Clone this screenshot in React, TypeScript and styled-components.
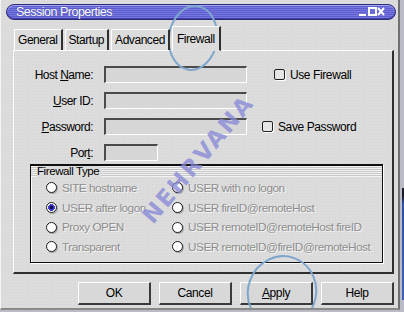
import React from 'react'
import styled, { createGlobalStyle } from 'styled-components'

const uiFont = `"Liberation Sans", Arial, sans-serif`

const GlobalStyle = createGlobalStyle`
  html, body {
    margin: 0;
    padding: 0;
    background: #b9bcc4;
  }
  body {
    font-family: ${uiFont};
  }
`

const Window = styled.div`
  position: relative;
  width: 400px;
  height: 310px;
  box-sizing: border-box;
  background-color: #dcdcdc;
  background-image: radial-gradient(rgba(0, 0, 0, 0.035) 0.6px, transparent 0.8px);
  background-size: 3px 3px;
  border-left: 1px solid #f4f4f4;
  border-right: 2px solid #707070;
  border-bottom: 2px solid #8a8a8a;
  display: flex;
  flex-direction: column;
  overflow: hidden;
`

const TitleBar = styled.div`
  margin: 4px 2px 0 5px;
  height: 14px;
  border-radius: 8px;
  border: 1px solid #2c2c78;
  background: repeating-linear-gradient(
    to bottom,
    #7676e0 0px,
    #7676e0 1px,
    #5e5ece 1px,
    #5e5ece 2px
  );
  box-shadow: inset 0 1px 0 #a8a8f4, inset 0 -1px 0 #3c3ca4;
  display: flex;
  align-items: center;
  justify-content: space-between;
  padding: 0 10px 0 9px;
`

const Title = styled.span`
  color: #ffffff;
  font-size: 12.5px;
  letter-spacing: -0.5px;
  text-shadow: 0 0 1px #303090;
`

const Controls = styled.div`
  display: flex;
  align-items: center;
`

const TabStrip = styled.div`
  display: flex;
  align-items: flex-end;
  margin: 6px 0 0 13px;
  height: 24px;
  position: relative;
  z-index: 1;
`

const Tab = styled.div<{ $active?: boolean }>`
  box-sizing: border-box;
  height: ${p => (p.$active ? '25px' : '21px')};
  margin-right: 2px;
  padding: ${p => (p.$active ? '5px 4px 0 4px' : '3px 3px 0 3px')};
  font-size: 12px;
  letter-spacing: -0.45px;
  color: #000;
  background: #dcdcdc;
  border-top: 1px solid #ffffff;
  border-left: 1px solid #ffffff;
  border-right: 2px solid #303030;
  border-bottom: ${p => (p.$active ? '1px solid #dcdcdc' : 'none')};
  margin-bottom: ${p => (p.$active ? '-1px' : '0')};
`

const Panel = styled.div`
  margin: 0 0 0 12px;
  width: 381px;
  height: 224px;
  box-sizing: border-box;
  border-top: 1px solid #ffffff;
  border-left: 1px solid #ffffff;
  border-right: 2px solid #303030;
  border-bottom: 2px solid #303030;
  padding: 15px 0 0 0;
  display: flex;
  flex-direction: column;
`

const FieldRow = styled.div<{ $gap: number }>`
  display: flex;
  align-items: center;
  height: 17px;
  margin-bottom: ${p => p.$gap}px;
`

const Label = styled.span`
  width: 79px;
  margin-right: 11px;
  text-align: right;
  font-size: 12px;
  letter-spacing: -0.5px;
  color: #000;
`

const Field = styled.div<{ $width: number }>`
  width: ${p => p.$width}px;
  height: 17px;
  box-sizing: border-box;
  background: #d6d6d6;
  border-top: 2px solid #4a4a4a;
  border-left: 2px solid #4a4a4a;
  border-right: 1px solid #ffffff;
  border-bottom: 1px solid #ffffff;
`

const CheckLabel = styled.label<{ $indent: number }>`
  display: flex;
  align-items: center;
  margin-left: ${p => p.$indent}px;
  font-size: 12px;
  letter-spacing: -0.4px;
  color: #000;
`

const CheckBox = styled.span`
  width: 9px;
  height: 9px;
  margin-right: 5px;
  background: #e6e6e6;
  border: 1px solid #202020;
  border-radius: 2px;
  box-shadow: 1px 1px 0 #ffffff;
`

const GroupBox = styled.div`
  margin: 3px 0 0 16px;
  width: 353px;
  height: 99px;
  box-sizing: border-box;
  border: 1px solid #101010;
  box-shadow: inset 1px 1px 0 #ffffff, 1px 1px 0 #ffffff;
  display: flex;
  flex-direction: column;
`

const GroupHeader = styled.div`
  box-sizing: border-box;
  height: 12px;
  padding-left: 6px;
  border-top: 1px solid #101010;
  background: repeating-linear-gradient(
    to bottom,
    #f2f2f2 0px,
    #f2f2f2 1px,
    #c8c8c8 1px,
    #c8c8c8 2px
  );
  font-size: 11.5px;
  line-height: 11px;
  letter-spacing: -0.4px;
  color: #000;
  display: flex;
  align-items: flex-start;
`

const HeaderText = styled.span`
  background: #dcdcdc;
  padding-right: 2px;
`

const RadioGrid = styled.div`
  display: grid;
  grid-template-columns: 126px 1fr;
  grid-auto-rows: 19.7px;
  padding: 1px 0 0 15px;
`

const RadioItem = styled.div`
  display: flex;
  align-items: center;
  font-size: 11.8px;
  letter-spacing: -0.5px;
  color: #8e8e8e;
  text-shadow: 1px 1px 0 #f4f4f4;
  white-space: nowrap;
`

const RadioDot = styled.span<{ $on?: boolean }>`
  box-sizing: border-box;
  width: 11px;
  height: 11px;
  margin-right: 5px;
  border-radius: 50%;
  border: 1px solid #1c1c1c;
  background: ${p => (p.$on ? 'radial-gradient(circle, #101040 0 1.5px, #3c3cd4 2px 3.4px, #ffffff 3.6px)' : '#ffffff')};
  box-shadow: 1px 1px 0 #a8a8a8;
`

const ButtonRow = styled.div`
  display: flex;
  justify-content: flex-end;
  gap: 8px;
  width: 393px;
  margin-top: 8px;
`

const Button = styled.button`
  width: 73px;
  height: 23px;
  box-sizing: border-box;
  background: #d8d8d8;
  border-top: 1px solid #ffffff;
  border-left: 1px solid #ffffff;
  border-right: 2px solid #3a3a3a;
  border-bottom: 2px solid #3a3a3a;
  font-family: ${uiFont};
  font-size: 12px;
  letter-spacing: -0.4px;
  color: #000;
  padding: 0;
`

const Watermark = styled.div`
  position: absolute;
  left: 106px;
  top: 146px;
  width: 182px;
  text-align: center;
  font-family: "DejaVu Sans", sans-serif;
  font-weight: bold;
  font-size: 23px;
  letter-spacing: 2px;
  color: rgba(136, 138, 214, 0.8);
  transform: rotate(-50deg);
  pointer-events: none;
`

const Overlay = styled.svg`
  position: absolute;
  left: 0;
  top: 0;
  pointer-events: none;
`

const BackStrip = styled.div`
  position: absolute;
  left: 402px;
  top: 188px;
  width: 2px;
  height: 112px;
  background: linear-gradient(to bottom, #1a1a2a 0 8px, #3050a8 16px, #4060b8);
`

export default function App() {
  return (
    <>
      <GlobalStyle />
      <Window>
        <TitleBar>
          <Title>Session Properties</Title>
          <Controls>
            <svg width="26" height="10" viewBox="0 0 26 10">
              <rect x="0" y="7" width="7" height="2" fill="#fff" />
              <rect x="10" y="1" width="7" height="7" fill="none" stroke="#fff" strokeWidth="2" />
              <path d="M19 1 L25 8 M25 1 L19 8" stroke="#fff" strokeWidth="2" />
            </svg>
          </Controls>
        </TitleBar>

        <TabStrip>
          <Tab>General</Tab>
          <Tab>Startup</Tab>
          <Tab>Advanced</Tab>
          <Tab $active>Firewall</Tab>
        </TabStrip>

        <Panel>
          <FieldRow $gap={9}>
            <Label>Host <u>N</u>ame:</Label>
            <Field $width={143} />
            <CheckLabel $indent={27}>
              <CheckBox />
              Use Firewall
            </CheckLabel>
          </FieldRow>
          <FieldRow $gap={9}>
            <Label><u>U</u>ser ID:</Label>
            <Field $width={143} />
          </FieldRow>
          <FieldRow $gap={9}>
            <Label><u>P</u>assword:</Label>
            <Field $width={143} />
            <CheckLabel $indent={15}>
              <CheckBox />
              Save Password
            </CheckLabel>
          </FieldRow>
          <FieldRow $gap={0}>
            <Label>Por<u>t</u>:</Label>
            <Field $width={54} />
          </FieldRow>

          <GroupBox>
            <GroupHeader>
              <HeaderText>Firewall Type</HeaderText>
            </GroupHeader>
            <RadioGrid>
              <RadioItem><RadioDot />SITE hostname</RadioItem>
              <RadioItem><RadioDot />USER with no logon</RadioItem>
              <RadioItem><RadioDot $on />USER after logon</RadioItem>
              <RadioItem><RadioDot />USER fireID@remoteHost</RadioItem>
              <RadioItem><RadioDot />Proxy OPEN</RadioItem>
              <RadioItem><RadioDot />USER remoteID@remoteHost fireID</RadioItem>
              <RadioItem><RadioDot />Transparent</RadioItem>
              <RadioItem><RadioDot />USER remoteID@fireID@remoteHost</RadioItem>
            </RadioGrid>
          </GroupBox>
        </Panel>

        <ButtonRow>
          <Button>OK</Button>
          <Button>Cancel</Button>
          <Button><u>A</u>pply</Button>
          <Button>Help</Button>
        </ButtonRow>

        <Watermark>NEHRVANA</Watermark>
        <Overlay width="404" height="312" viewBox="0 0 404 312">
          <ellipse cx="192" cy="38" rx="24" ry="32" fill="none" stroke="#7ea6cc" strokeWidth="2" transform="rotate(8 192 38)" />
          <ellipse cx="281" cy="292" rx="34" ry="36" fill="none" stroke="#7ea6cc" strokeWidth="2" transform="rotate(20 281 292)" />
        </Overlay>
      </Window>
      <BackStrip />
    </>
  )
}
